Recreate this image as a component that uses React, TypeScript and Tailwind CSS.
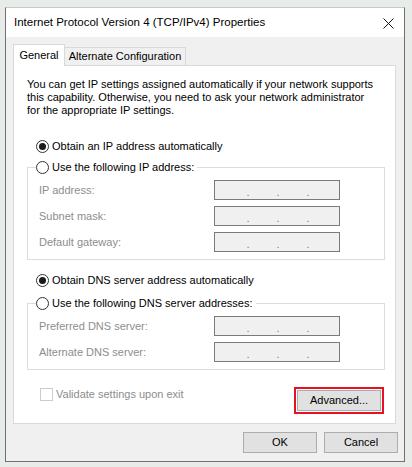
import React from 'react';

const font = "font-['Liberation_Sans','Noto_Sans',sans-serif]";

function Radio({ checked, label }: { checked?: boolean; label: string }) {
    return (
        <div className="flex items-center h-[16px] whitespace-nowrap">
            <span className="w-[13px] h-[13px] rounded-full border border-[#333333] bg-white flex items-center justify-center">
                {checked && <span className="w-[7px] h-[7px] rounded-full bg-[#1a1a1a]" />}
            </span>
            <span className="ml-[3px] text-[#000] leading-[16px]">{label}</span>
        </div>
    );
}

function IpField() {
    return (
        <div className="w-[126px] h-[20px] border border-[#7a7a7a] bg-[#f0f0f0] flex items-end pb-[1px] pl-[30px] gap-[24px] text-[#6d7f9a] leading-[12px]">
            <span className="w-[6px] text-center">.</span>
            <span className="w-[6px] text-center">.</span>
            <span className="w-[6px] text-center">.</span>
        </div>
    );
}

function Row({ label }: { label: string }) {
    return (
        <div className="flex items-center h-[20px]">
            <span className="w-[175px] text-[#8d8d8d]">{label}</span>
            <IpField />
        </div>
    );
}

function Group({ legend, rows, top }: { legend: string; rows: string[]; top: string }) {
    return (
        <fieldset className={`ml-[13px] w-[358px] border border-[#dcdcdc] ${top}`}>
            <legend className="ml-[8px] pr-[3px]">
                <Radio label={legend} />
            </legend>
            <div className="pl-[11px] pt-[5px] pb-[7px] flex flex-col gap-[6px]">
                {rows.map((r) => (
                    <Row key={r} label={r} />
                ))}
            </div>
        </fieldset>
    );
}

function Button({ children, className = '' }: { children: React.ReactNode; className?: string }) {
    return (
        <div className={`h-[21px] w-[74px] bg-[#e1e1e1] border border-[#adadad] flex items-center justify-center text-[#000] ${className}`}>
            {children}
        </div>
    );
}

export default function App() {
    return (
        <div className={`w-[412px] h-[467px] bg-[#e8ece8] pt-[7px] pl-[5px] text-[11px] ${font}`}>
            <div className="w-[400px] h-[455px] border border-[#707070] border-t-[#c8c8c8] bg-[#f0f0f0] flex flex-col">
                {/* Title bar */}
                <div className="h-[29px] bg-white flex items-center justify-between pl-[8px] pr-[10px] shrink-0">
                    <span className="text-[#000] text-[11.5px] pt-[1px]">Internet Protocol Version 4 (TCP/IPv4) Properties</span>
                    <svg width="11" height="11" viewBox="0 0 11 11" className="mt-[1px]">
                        <path d="M0.5 0.5 L10.5 10.5 M10.5 0.5 L0.5 10.5" stroke="#111" strokeWidth="1" />
                    </svg>
                </div>

                <div className="pl-[7px] pr-[8px] pt-[8px] flex flex-col">
                    {/* Tabs */}
                    <div className="flex items-end h-[20px] relative z-10 whitespace-nowrap">
                        <div className="w-[52px] h-[22px] -mb-[1px] bg-white border border-b-0 border-[#d9d9d9] flex items-center justify-center text-[#000]">
                            General
                        </div>
                        <div className="w-[121px] h-[18px] bg-[#f0f0f0] border border-l-0 border-b-0 border-[#d9d9d9] flex items-center justify-center text-[#000]">
                            Alternate Configuration
                        </div>
                    </div>

                    {/* Panel */}
                    <div className="h-[359px] bg-white border border-[#d9d9d9] flex flex-col">
                        <p className="mt-[12px] pl-[13px] pr-[20px] leading-[13px] text-[#000]">
                            You can get IP settings assigned automatically if your network supports this capability. Otherwise, you need to ask your network administrator for the appropriate IP settings.
                        </p>

                        <div className="mt-[21px] ml-[22px]">
                            <Radio checked label="Obtain an IP address automatically" />
                        </div>
                        <Group
                            legend="Use the following IP address:"
                            rows={['IP address:', 'Subnet mask:', 'Default gateway:']}
                            top="mt-[5px]"
                        />

                        <div className="mt-[12px] ml-[22px]">
                            <Radio checked label="Obtain DNS server address automatically" />
                        </div>
                        <Group
                            legend="Use the following DNS server addresses:"
                            rows={['Preferred DNS server:', 'Alternate DNS server:']}
                            top="mt-[7px]"
                        />

                        <div className="mt-[17px] pl-[26px] pr-[11px] flex items-start justify-between">
                            <div className="flex items-center h-[14px]">
                                <span className="w-[13px] h-[13px] border border-[#cccccc] bg-white" />
                                <span className="ml-[3px] text-[#8d8d8d]">Validate settings upon exit</span>
                            </div>
                            <div className="border-2 border-[#e81123] p-[1px]">
                                <Button className="w-[84px] h-[17px]">Advanced...</Button>
                            </div>
                        </div>
                    </div>
                </div>

                {/* Footer buttons */}
                <div className="mt-[8px] pr-[6px] flex justify-end gap-[7px]">
                    <Button>OK</Button>
                    <Button>Cancel</Button>
                </div>
            </div>
        </div>
    );
}
